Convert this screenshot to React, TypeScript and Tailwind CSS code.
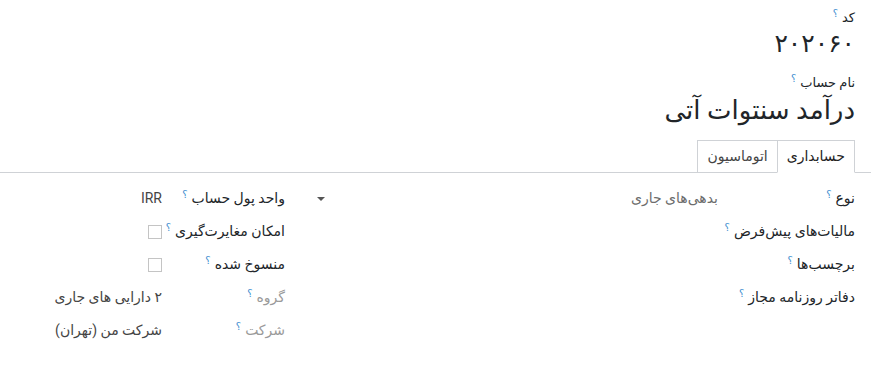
import React from "react";

function Help() {
  return <sup className="mr-[4px] text-[10px] text-[#3f8fd0]">؟</sup>;
}

function Label({ text, muted = false }: { text: string; muted?: boolean }) {
  return (
    <span className={muted ? "text-[#9a9a9a]" : "text-[#212529]"}>
      {text}
      <Help />
    </span>
  );
}

function Checkbox() {
  return <span className="block h-[14px] w-[14px] border border-[#c4c4c4] bg-white" />;
}

export default function App() {
  const rightRows = [
    {
      label: "نوع",
      value: (
        <div className="flex items-center justify-between">
          <span className="text-[#6c6c6c]">بدهی‌های جاری</span>
          <span className="ml-[2px] h-0 w-0 border-x-[4px] border-t-[4px] border-x-transparent border-t-[#555]" />
        </div>
      ),
    },
    { label: "مالیات‌های پیش‌فرض", value: null },
    { label: "برچسب‌ها", value: null },
    { label: "دفاتر روزنامه مجاز", value: null },
  ];
  const leftRows = [
    { label: "واحد پول حساب", value: <span className="text-[#444]" style={{ fontFamily: "Roboto, sans-serif" }}>IRR</span> },
    { label: "امکان مغایرت‌گیری", value: <Checkbox /> },
    { label: "منسوخ شده", value: <Checkbox /> },
    { label: "گروه", value: <span className="text-[#444]">۲ دارایی های جاری</span>, muted: true },
    { label: "شرکت", value: <span className="text-[#444]">شرکت من (تهران)</span>, muted: true },
  ];

  return (
    <div dir="rtl" className="h-[381px] w-[871px] bg-white text-[14px] text-[#212529]" style={{ fontFamily: "Roboto, 'DejaVu Sans', sans-serif" }}>
      <div className="px-4 pt-[9px]">
        <div className="text-[13px] leading-[18px]">
          <Label text="کد" />
        </div>
        <div className="text-[25px] leading-[34px]">۲۰۲۰۶۰</div>
        <div className="mt-[13px] text-[13px] leading-[18px]">
          <Label text="نام حساب" />
        </div>
        <div className="text-[26px] leading-[36px]">درآمد سنتوات آتی</div>
      </div>

      <div className="mt-[12px] flex border-b border-[#cfd2d6] px-4">
        <div className="mb-[-1px] flex h-[33px] items-center border border-b-white border-[#cfd2d6] px-[9px] text-[#222]">حسابداری</div>
        <div className="mb-[-1px] flex h-[33px] items-center border border-r-0 border-[#cfd2d6] px-[9px] text-[#444]">اتوماسیون</div>
      </div>

      <div className="flex px-4 pt-[9px]">
        <div className="w-[540px]">
          {rightRows.map((r) => (
            <div key={r.label} className="flex h-[33px] items-center">
              <div className="w-[137px] shrink-0"><Label text={r.label} /></div>
              <div className="flex-1">{r.value}</div>
            </div>
          ))}
        </div>
        <div className="mr-[30px] flex-1">
          {leftRows.map((r) => (
            <div key={r.label} className="flex h-[33px] items-center">
              <div className="w-[123px] shrink-0"><Label text={r.label} muted={r.muted} /></div>
              <div className="flex-1">{r.value}</div>
            </div>
          ))}
        </div>
      </div>
    </div>
  );
}
